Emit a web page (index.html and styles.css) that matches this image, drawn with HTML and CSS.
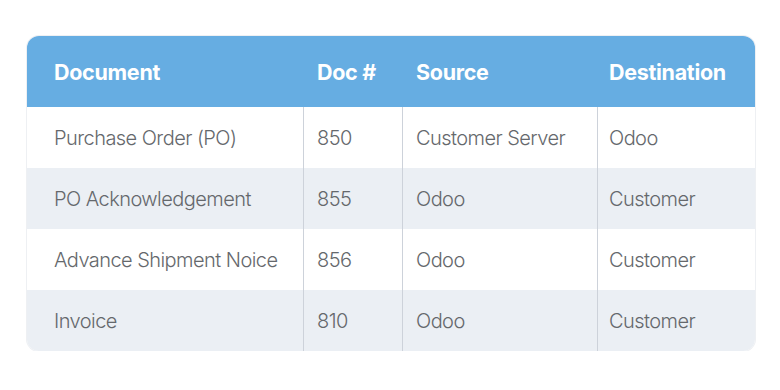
FILE: index.html
```html
<!DOCTYPE html>
<html>
<head>
<meta charset="utf-8">
<link rel="stylesheet" href="styles.css">
</head>
<body>
<div class="card">
  <div class="row head">
    <div class="cell first">Document</div>
    <div class="cell">Doc #</div>
    <div class="cell">Source</div>
    <div class="cell last">Destination</div>
  </div>
  <div class="row">
    <div class="cell first">Purchase Order (PO)</div>
    <div class="cell line">850</div>
    <div class="cell line">Customer Server</div>
    <div class="cell line last">Odoo</div>
  </div>
  <div class="row alt">
    <div class="cell first">PO Acknowledgement</div>
    <div class="cell line">855</div>
    <div class="cell line">Odoo</div>
    <div class="cell line last">Customer</div>
  </div>
  <div class="row">
    <div class="cell first">Advance Shipment Noice</div>
    <div class="cell line">856</div>
    <div class="cell line">Odoo</div>
    <div class="cell line last">Customer</div>
  </div>
  <div class="row alt">
    <div class="cell first">Invoice</div>
    <div class="cell line">810</div>
    <div class="cell line">Odoo</div>
    <div class="cell line last">Customer</div>
  </div>
</div>
</body>
</html>
```
FILE: styles.css
```css
html, body {
  margin: 0;
  padding: 0;
  background: #ffffff;
}
body {
  padding: 36px 0 0 27px;
  font-family: Inter, "Noto Sans", sans-serif;
}
.card {
  width: 728px;
  border-radius: 12px;
  overflow: hidden;
  background: #ffffff;
  box-shadow: 0 0 0 1px #eef0f3;
}
.row {
  display: grid;
  grid-template-columns: 276px 99px 195px 158px;
  height: 61px;
}
.row.head {
  height: 71px;
  background: #66ade2;
}
.row.alt {
  background: #ebeff4;
}
.cell {
  display: flex;
  align-items: center;
  padding-left: 14px;
  font-size: 20px;
  font-weight: 300;
  color: #65686c;
  letter-spacing: -0.55px;
  white-space: nowrap;
}
.cell.first {
  padding-left: 27px;
}
.cell.line {
  border-left: 1px solid #cdd2da;
  padding-left: 13px;
}
.cell.last {
  padding-left: 12px;
}
.cell.line.last {
  padding-left: 11px;
}
.head .cell {
  color: #ffffff;
  font-weight: 700;
  font-size: 21.5px;
  letter-spacing: -0.3px;
}
```
